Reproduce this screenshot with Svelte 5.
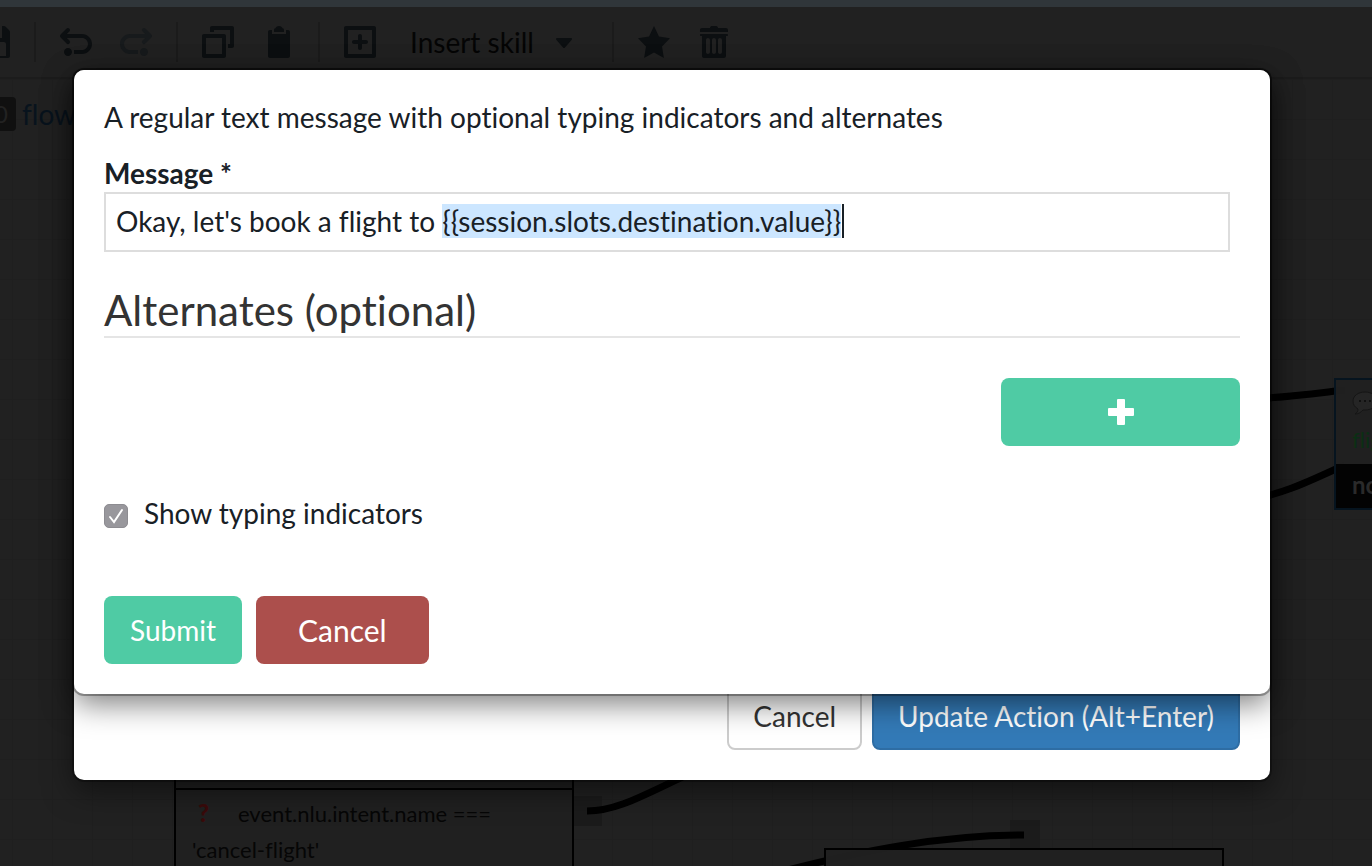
<script>
  import { onMount } from 'svelte';

  const icons = {
    save: 'M15.71 2.29l-2-2A.997.997 0 0013 0h-1v6H4V0H1C.45 0 0 .45 0 1v14c0 .55.45 1 1 1h14c.55 0 1-.45 1-1V3c0-.28-.11-.53-.29-.71zM14 15H2V9c0-.55.45-1 1-1h10c.55 0 1 .45 1 1v6zM11 1H9v4h2V1z',
    undo: 'M4 11c-1.1 0-2 .9-2 2s.9 2 2 2 2-.9 2-2-.9-2-2-2zm7-7H3.41l1.29-1.29c.19-.18.3-.43.3-.71a1.003 1.003 0 00-1.71-.71l-3 3C.11 4.47 0 4.72 0 5c0 .28.11.53.29.71l3 3a1.003 1.003 0 001.42-1.42L3.41 6H11c1.66 0 3 1.34 3 3s-1.34 3-3 3H7v2h4c2.76 0 5-2.24 5-5s-2.24-5-5-5z',
    redo: 'M12 11c1.1 0 2 .9 2 2s-.9 2-2 2-2-.9-2-2 .9-2 2-2zM5 4h7.59L11.3 2.71A.997.997 0 0112.71 1.29l3 3c.18.18.29.43.29.71 0 .28-.11.53-.29.71l-3 3a1.003 1.003 0 01-1.42-1.42L12.59 6H5C3.34 6 2 7.34 2 9s1.34 3 3 3h4v2H5c-2.76 0-5-2.24-5-5s2.24-5 5-5z',
    copy: 'M15 0H5c-.55 0-1 .45-1 1v2h2V2h8v7h-1v2h2c.55 0 1-.45 1-1V1c0-.55-.45-1-1-1zm-4 4H1c-.55 0-1 .45-1 1v10c0 .55.45 1 1 1h10c.55 0 1-.45 1-1V5c0-.55-.45-1-1-1zm-1 10H2V6h8v8z',
    paste: 'M11 2c0-.55-.45-1-1-1h.22C9.88.4 9.24 0 8.5 0S7.12.4 6.78 1H7c-.55 0-1 .45-1 1v1h5V2zm2 0h-1v2H5V2H4c-.55 0-1 .45-1 1v12c0 .55.45 1 1 1h9c.55 0 1-.45 1-1V3c0-.55-.45-1-1-1z',
    add: 'M15 0H1C.45 0 0 .45 0 1v14c0 .55.45 1 1 1h14c.55 0 1-.45 1-1V1c0-.55-.45-1-1-1zm-1 14H2V2h12v12zM5 9h2v2c0 .55.45 1 1 1s1-.45 1-1V9h2c.55 0 1-.45 1-1s-.45-1-1-1H9V5c0-.55-.45-1-1-1s-1 .45-1 1v2H5c-.55 0-1 .45-1 1s.45 1 1 1z',
    caret: 'M12 6.5c0-.28-.22-.5-.5-.5h-7a.495.495 0 00-.37.83l3.5 4c.09.1.22.17.37.17s.28-.07.37-.17l3.5-4c.08-.09.13-.2.13-.33z',
    star: 'M16 6.11l-5.53-.84L8 0 5.53 5.27 0 6.11l4 4.1L3.06 16 8 13.27 12.94 16 12 10.21l4-4.1z',
    trash: 'M14.49 3.99h-13c-.28 0-.5.22-.5.5s.22.5.5.5h.5v10c0 .55.45 1 1 1h10c.55 0 1-.45 1-1v-10h.5c.28 0 .5-.22.5-.5s-.22-.5-.5-.5zm-8.5 9c0 .55-.45 1-1 1s-1-.45-1-1v-6c0-.55.45-1 1-1s1 .45 1 1v6zm3 0c0 .55-.45 1-1 1s-1-.45-1-1v-6c0-.55.45-1 1-1s1 .45 1 1v6zm3 0c0 .55-.45 1-1 1s-1-.45-1-1v-6c0-.55.45-1 1-1s1 .45 1 1v6zm2-12h-4c0-.55-.45-1-1-1h-2c-.55 0-1 .45-1 1h-4c-.55 0-1 .45-1 1v1h14v-1c0-.55-.45-1-1-1z'
  };

  const variable = '{{session.slots.destination.value}}';
  let message = $state("Okay, let's book a flight to " + variable);
  let typing = $state(true);
  let caretLeft = $state(0);
  let field;
  let ruler;

  // Select the inserted variable and place the caret behind it.
  onMount(() => {
    field.focus();
    field.setSelectionRange(message.length - variable.length, message.length);
    const style = getComputedStyle(field);
    ruler.style.font = `${style.fontSize} ${style.fontFamily}`;
    ruler.textContent = message;
    const width = ruler.getBoundingClientRect().width;
    ruler.textContent = '';
    caretLeft = Math.round(width + parseFloat(style.paddingLeft) + parseFloat(style.borderLeftWidth));
  });
</script>

{#snippet icon(name)}
  <svg class="icon" viewBox="0 0 16 16" aria-hidden="true"><path fill-rule="evenodd" d={icons[name]} /></svg>
{/snippet}

<div class="page">
  <div class="strip"></div>
  <div class="toolbar">
    <button class="tool" aria-label="Save">{@render icon('save')}</button>
    <span class="divider"></span>
    <button class="tool" aria-label="Undo">{@render icon('undo')}</button>
    <button class="tool off" aria-label="Redo">{@render icon('redo')}</button>
    <span class="divider"></span>
    <button class="tool" aria-label="Copy">{@render icon('copy')}</button>
    <button class="tool" aria-label="Paste">{@render icon('paste')}</button>
    <span class="divider"></span>
    <button class="tool" aria-label="Add node">{@render icon('add')}</button>
    <button class="tool skill">Insert skill {@render icon('caret')}</button>
    <span class="divider"></span>
    <button class="tool" aria-label="Set as start">{@render icon('star')}</button>
    <button class="tool" aria-label="Delete">{@render icon('trash')}</button>
  </div>

  <main class="canvas">
    <svg class="links" aria-hidden="true">
      <rect x="574" y="717" width="28" height="30" />
      <rect x="1010" y="741" width="30" height="30" />
      <path d="M587 732C620 732 650 712 700 690" />
      <path d="M780 793C860 772 940 756 1024 756" />
      <path d="M1250 320C1280 319 1310 315 1345 311" />
      <path d="M1250 421C1290 413 1315 399 1345 386" />
    </svg>

    <div class="crumb"><span class="badge">0</span><a href="#flow">flow</a></div>

    <div class="node intents">
      <div class="head"></div>
      <p><b>?</b>event.nlu.intent.name === 'cancel-flight'</p>
    </div>

    <div class="node blank">
      <svg viewBox="0 0 40 20" aria-hidden="true"><circle cx="20" cy="20" r="10" /></svg>
    </div>

    <div class="node says">
      <svg viewBox="0 0 26 24" aria-hidden="true">
        <path d="M13 1C6 1 1 5 1 10c0 4 2 6 5 8 0 2-1 4-3 5 4 0 6-2 8-4h2c7 0 12-4 12-9S20 1 13 1z" />
        <circle cx="8" cy="10" r="1" /><circle cx="13" cy="10" r="1" /><circle cx="18" cy="10" r="1" />
      </svg>
      <p>flight</p>
      <strong>no</strong>
    </div>
  </main>

  <div class="overlay">
    <section class="modal action">
      <button class="btn plain">Cancel</button>
      <button class="btn update">Update Action (Alt+Enter)</button>
    </section>

    <form class="modal content" onsubmit={(e) => e.preventDefault()}>
      <p class="about">A regular text message with optional typing indicators and alternates</p>
      <label class="name" for="message">Message *</label>
      <div class="field">
        <input id="message" type="text" autocomplete="off" spellcheck="false" bind:value={message} bind:this={field} />
        <span class="ruler" bind:this={ruler}></span>
        <span class="cursor" style="left: {caretLeft}px"></span>
      </div>
      <h2>Alternates (optional)</h2>
      <button class="btn add" type="button" aria-label="Add alternate">
        <svg viewBox="0 0 26 26" aria-hidden="true"><path d="M9 1q0-1 1-1h6q1 0 1 1v8h8q1 0 1 1v6q0 1-1 1h-8v8q0 1-1 1h-6q-1 0-1-1v-8H1q-1 0-1-1v-6q0-1 1-1h8z" /></svg>
      </button>
      <label class="check">
        <span class="box">
          <input type="checkbox" bind:checked={typing} />
          {#if typing}
            <svg viewBox="0 0 24 24" aria-hidden="true"><path d="M6 13l4 5 8-12" /></svg>
          {/if}
        </span>
        Show typing indicators
      </label>
      <div class="actions">
        <button class="btn submit" type="submit">Submit</button>
        <button class="btn cancel" type="button">Cancel</button>
      </div>
    </form>
  </div>
</div>

<style>
  :global(body) {
    margin: 0;
    background: #212121;
  }
  .page {
    position: relative;
    display: flex;
    flex-direction: column;
    min-height: 100vh;
    overflow: hidden;
    font-family: Lato, sans-serif;
    font-size: 28px;
    line-height: 40px;
    font-variant-ligatures: none;
    color: #182026;
  }
  .page * {
    box-sizing: border-box;
  }
  p,
  h2 {
    margin: 0;
  }
  button,
  input {
    font: inherit;
    font-variant-ligatures: none;
    color: inherit;
  }

  .strip {
    height: 7px;
    background: #30363a;
  }
  .toolbar {
    display: flex;
    align-items: center;
    height: 72px;
    margin-left: -36px;
    border-bottom: 2px solid #1c1c1c;
  }
  .tool {
    display: flex;
    flex: none;
    align-items: center;
    justify-content: center;
    width: 60px;
    height: 60px;
    padding: 0;
    border: 0;
    background: none;
    color: #0c0f11;
  }
  .tool.off {
    color: #171a1c;
  }
  .tool.skill {
    justify-content: flex-start;
    gap: 14px;
    width: 212px;
    padding-left: 20px;
    color: #050505;
  }
  .skill .icon {
    fill: #0c0f11;
  }
  .icon {
    width: 32px;
    height: 32px;
    fill: currentColor;
  }
  .divider {
    flex: none;
    width: 2px;
    height: 40px;
    margin: 0 10px;
    background: #1b1b1b;
  }

  .canvas {
    position: relative;
    flex: 1;
    overflow: hidden;
    background:
      linear-gradient(#1f1f1f 1px, transparent 1px) 0 0 / 40px 40px,
      linear-gradient(90deg, #1f1f1f 1px, transparent 1px) 12px 0 / 40px 40px,
      #212121;
  }
  .links {
    position: absolute;
    width: 100%;
    height: 100%;
  }
  .links path {
    fill: none;
    stroke: #000;
    stroke-width: 7;
  }
  .links rect {
    fill: #1b1b1b;
  }
  .crumb {
    position: absolute;
    top: 15px;
    left: -14px;
    display: flex;
    align-items: center;
    gap: 6px;
  }
  .crumb a {
    color: #08131d;
    text-decoration: none;
  }
  .badge {
    width: 30px;
    height: 34px;
    padding-right: 8px;
    border-radius: 4px;
    background: #101010;
    color: #222;
    font-size: 24px;
    line-height: 34px;
    text-align: right;
  }
  .node {
    position: absolute;
    border: 2px solid #000;
    background: #202020;
    font-size: 22px;
    line-height: 36px;
    color: #060606;
  }
  .intents {
    top: 660px;
    left: 174px;
    width: 400px;
    height: 220px;
  }
  .intents .head {
    height: 49px;
    border-bottom: 2px solid #000;
  }
  .intents p {
    padding: 5px 16px;
  }
  .intents b {
    display: inline-block;
    width: 46px;
    padding-left: 6px;
    color: #3a0a0a;
    font-size: 24px;
    font-weight: 900;
  }
  .blank {
    top: 769px;
    left: 824px;
    width: 400px;
    height: 60px;
    background: rgba(33, 33, 33, 0.95);
  }
  .blank svg {
    display: block;
    width: 40px;
    margin: 6px;
    fill: none;
    stroke: #1a1a1a;
  }
  .says {
    top: 299px;
    left: 1334px;
    width: 200px;
    height: 132px;
    border-color: #06141f;
    background: rgba(33, 33, 33, 0.95);
  }
  .says svg {
    display: block;
    width: 26px;
    height: 24px;
    margin: 11px 16px 5px;
    fill: #252525;
    stroke: #151515;
  }
  .says circle {
    fill: #0a0a0a;
    stroke: none;
  }
  .says p {
    height: 44px;
    padding-left: 16px;
    line-height: 40px;
    color: #0b2f14;
  }
  .says strong {
    display: block;
    height: 44px;
    padding-left: 16px;
    background: #030303;
    color: #2a2a2a;
    font-size: 24px;
    line-height: 42px;
  }

  .overlay {
    position: absolute;
    inset: 0;
    display: grid;
    grid-template-rows: auto 86px;
    align-content: start;
    padding: 70px 102px 0 74px;
  }
  .modal {
    grid-column: 1;
    padding: 27px 30px 30px;
    border-radius: 10px;
    background: #fff;
    box-shadow:
      0 0 0 2px rgba(0, 0, 0, 0.3),
      0 10px 30px rgba(0, 0, 0, 0.5);
  }
  .action {
    grid-row: 1 / 3;
    display: flex;
    align-items: flex-end;
    justify-content: flex-end;
    gap: 10px;
  }
  .content {
    z-index: 1;
    grid-row: 1;
    display: flex;
    flex-direction: column;
  }
  .btn {
    height: 68px;
    padding: 0 24px;
    border: 2px solid transparent;
    border-radius: 8px;
    color: #fff;
  }
  .plain {
    border-color: #ccc;
    background: #fff;
    color: #333;
  }
  .update {
    border-color: #2e6da4;
    background: #337ab7;
  }
  .name {
    margin-top: 17px;
    line-height: 38px;
    font-weight: 700;
  }
  .field {
    position: relative;
    margin-right: 10px;
  }
  .field input {
    display: block;
    width: 100%;
    height: 60px;
    padding: 0 10px 2px;
    border: 2px solid #ddd;
    border-radius: 0;
    outline: 0;
    background: #fff;
  }
  .field input::selection {
    background: #cce6ff;
    color: #182026;
  }
  .ruler {
    position: absolute;
    white-space: pre;
    font-variant-ligatures: none;
  }
  .cursor {
    position: absolute;
    top: 12px;
    width: 2px;
    height: 34px;
    background: #182026;
  }
  h2 {
    margin-top: 36px;
    padding-bottom: 4px;
    border-bottom: 2px solid #e5e5e5;
    color: #333;
    font-size: 42px;
    font-weight: 400;
    line-height: 44px;
  }
  .add {
    display: flex;
    align-items: center;
    justify-content: center;
    align-self: flex-end;
    width: 21%;
    margin-top: 40px;
    background: #4fcba4;
  }
  .add svg {
    width: 26px;
    height: 26px;
    fill: #fff;
  }
  .check {
    display: flex;
    align-items: flex-start;
    gap: 16px;
    margin-top: 47px;
  }
  .box {
    display: grid;
    width: 24px;
    height: 24px;
    margin-top: 11px;
  }
  .box > * {
    grid-area: 1 / 1;
  }
  .box input {
    width: 24px;
    height: 24px;
    margin: 0;
    border: 1px solid #8d8c91;
    border-radius: 5px;
    background: #98979c;
    appearance: none;
  }
  .box svg {
    fill: none;
    stroke: #fff;
    stroke-width: 2;
    stroke-linecap: round;
    pointer-events: none;
  }
  .actions {
    display: flex;
    gap: 14px;
    margin-top: 63px;
  }
  .submit {
    background: #4fcba4;
  }
  .cancel {
    padding: 0 40px;
    background: #ac4f4c;
    font-size: 30px;
  }
</style>
